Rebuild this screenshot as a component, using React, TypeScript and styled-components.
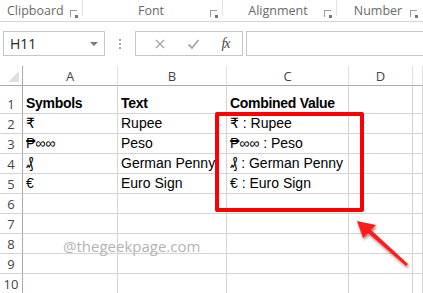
import React from "react";
import styled, { createGlobalStyle } from "styled-components";

const GlobalStyle = createGlobalStyle`
  html, body {
    margin: 0;
    padding: 0;
    background: #ffffff;
    overflow: hidden;
  }
  body {
    font-family: "Liberation Sans", Arial, sans-serif;
  }
`;

const Page = styled.div`
  position: relative;
  width: 423px;
  height: 293px;
  overflow: hidden;
  display: flex;
  flex-direction: column;
  background: #ffffff;
`;

const Ribbon = styled.div`
  height: 21px;
  border-bottom: 1px solid #d5d5d5;
  display: grid;
  grid-template-columns: 83px 140px 114px 1fr;
  align-items: start;
  flex-shrink: 0;
`;

const Group = styled.div<{ $first?: boolean }>`
  display: flex;
  align-items: flex-end;
  justify-content: ${(p) => (p.$first ? "flex-start" : "center")};
  box-sizing: border-box;
  height: 20px;
  padding-bottom: 1px;
  padding-left: ${(p) => (p.$first ? "7px" : "0")};
  padding-right: ${(p) => (p.$first ? "0" : "4px")};
  position: relative;
  font-family: "Open Sans", "Liberation Sans", sans-serif;
  font-size: 12.5px;
  line-height: 16px;
  color: #6a6a6a;
  &::before {
    content: "";
    position: absolute;
    right: 0;
    top: 0;
    height: 16px;
    border-right: 1px solid #e1e1e1;
  }
  &:last-child::before {
    display: none;
  }
`;

const Launcher = styled.span`
  position: absolute;
  right: 6px;
  top: 10px;
  width: 6px;
  height: 6px;
  border-left: 1px solid #9a9a9a;
  border-top: 1px solid #9a9a9a;
  &::after {
    content: "";
    position: absolute;
    right: -1px;
    bottom: -1px;
    width: 3px;
    height: 3px;
    background: #777;
  }
`;

const FormulaBar = styled.div`
  display: flex;
  align-items: center;
  padding: 9px 0 10px 3px;
  height: 25px;
  flex-shrink: 0;
`;

const NameBox = styled.div`
  height: 23px;
  border: 1px solid #c6c6c6;
  display: flex;
  align-items: center;
  justify-content: space-between;
  padding: 0 6px 0 6px;
  box-sizing: content-box;
  width: 88px;
  font-family: "Open Sans", "Liberation Sans", sans-serif;
  font-size: 14px;
  color: #262626;
`;

const Caret = styled.span`
  width: 0;
  height: 0;
  border-left: 4px solid transparent;
  border-right: 4px solid transparent;
  border-top: 4px solid #7a7a7a;
`;

const Dots = styled.div`
  width: 30px;
  display: flex;
  flex-direction: column;
  align-items: center;
  gap: 2px;
  span {
    width: 2px;
    height: 2px;
    background: #a6a6a6;
  }
`;

const FuncBox = styled.div`
  width: 108px;
  height: 25px;
  border: 1px solid #c6c6c6;
  display: flex;
  align-items: center;
  justify-content: space-around;
  padding: 0 2px 0 8px;
  box-sizing: border-box;
`;

const Fx = styled.span`
  font-family: "Liberation Serif", serif;
  font-style: italic;
  font-size: 14px;
  color: #444;
  letter-spacing: -1px;
`;

const FormulaInput = styled.div`
  flex: 1;
  height: 23px;
  margin-left: 3px;
  border: 1px solid #c6c6c6;
  border-right: 0;
`;

const Sheet = styled.div`
  position: relative;
  display: grid;
  grid-template-columns: 23px 95px 109px 122px 64px 1fr;
  grid-template-rows: 20px 28px repeat(9, 20px);
  flex: 1;
`;

const ColHead = styled.div<{ $corner?: boolean }>`
  border-right: 1px solid ${(p) => (p.$corner ? "#ababab" : "#e1e1e1")};
  border-bottom: 1px solid #ababab;
  display: flex;
  align-items: center;
  justify-content: center;
  font-family: "Open Sans", "Liberation Sans", sans-serif;
  font-size: 13px;
  color: #444;
  position: relative;
`;

const Triangle = styled.span`
  position: absolute;
  right: 3px;
  bottom: 3px;
  width: 0;
  height: 0;
  border-left: 11px solid transparent;
  border-bottom: 11px solid #dfdfdf;
`;

const RowHead = styled.div`
  border-right: 1px solid #ababab;
  border-bottom: 1px solid #d4d4d4;
  display: flex;
  align-items: flex-end;
  justify-content: center;
  font-family: "Open Sans", "Liberation Sans", sans-serif;
  font-size: 13px;
  line-height: 18px;
  color: #444;
`;

const Cell = styled.div<{ $bold?: boolean }>`
  border-right: 1px solid #d4d4d4;
  border-bottom: 1px solid #d4d4d4;
  display: flex;
  align-items: flex-end;
  padding: 0 0 0 3px;
  font-family: "Liberation Sans", "DejaVu Sans", sans-serif;
  font-size: 14px;
  font-weight: ${(p) => (p.$bold ? 700 : 400)};
  letter-spacing: ${(p) => (p.$bold ? "-0.3px" : "0")};
  line-height: 19px;
  color: #000;
  white-space: nowrap;
  overflow: visible;
  min-width: 0;
`;

const Highlight = styled.div`
  position: absolute;
  left: 215px;
  top: 46px;
  width: 141px;
  height: 92px;
  border: 4px solid #ff0000;
  border-radius: 2px;
  pointer-events: none;
`;

const Watermark = styled.div`
  position: absolute;
  left: 63px;
  top: 170px;
  font-family: "Open Sans", "Liberation Sans", sans-serif;
  font-size: 15px;
  color: #b3b3b3;
`;

const Arrow = styled.svg`
  position: absolute;
  left: 352px;
  top: 150px;
`;

const groups = ["Clipboard", "Font", "Alignment", "Number"];
const columns = ["A", "B", "C", "D", ""];

const rows: string[][] = [
  ["Symbols", "Text", "Combined Value"],
  ["₹", "Rupee", "₹ : Rupee"],
  ["₱∞∞", "Peso", "₱∞∞ : Peso"],
  ["₰", "German Penny", "₰ : German Penny"],
  ["€", "Euro Sign", "€ : Euro Sign"],
  [],
  [],
  [],
  [],
  [],
];

export default function App() {
  return (
    <Page>
      <GlobalStyle />
      <Ribbon>
        {groups.map((g, i) => (
          <Group key={g} $first={i === 0}>
            {g}
            <Launcher />
          </Group>
        ))}
      </Ribbon>
      <FormulaBar>
        <NameBox>
          H11
          <Caret />
        </NameBox>
        <Dots>
          <span />
          <span />
          <span />
        </Dots>
        <FuncBox>
          <svg width="12" height="12" viewBox="0 0 12 12">
            <path d="M2 2 L10 10 M10 2 L2 10" stroke="#a8a8a8" strokeWidth="1.4" />
          </svg>
          <svg width="13" height="12" viewBox="0 0 13 12">
            <path d="M1.5 6.5 L5 10 L11.5 2" stroke="#a8a8a8" strokeWidth="1.8" fill="none" />
          </svg>
          <Fx>fx</Fx>
        </FuncBox>
        <FormulaInput />
      </FormulaBar>
      <Sheet>
        <ColHead $corner>
          <Triangle />
        </ColHead>
        {columns.map((c, i) => (
          <ColHead key={i}>{c}</ColHead>
        ))}
        {rows.map((r, ri) => (
          <React.Fragment key={ri}>
            <RowHead>{ri + 1}</RowHead>
            {[0, 1, 2, 3, 4].map((ci) => (
              <Cell key={ci} $bold={ri === 0}>
                {r[ci] ?? ""}
              </Cell>
            ))}
          </React.Fragment>
        ))}
        <Highlight />
        <Watermark>@thegeekpage.com</Watermark>
        <Arrow width="64" height="56" viewBox="0 0 64 56">
          <defs>
            <filter id="sh" x="-30%" y="-30%" width="160%" height="160%">
              <feDropShadow dx="1" dy="2" stdDeviation="1.5" floodColor="#000" floodOpacity="0.45" />
            </filter>
          </defs>
          <path
            d="M5 5 L24 9 L19 14 L56 48 L54 50 L16 17 L11 22 Z"
            fill="#ff1a1a"
            filter="url(#sh)"
          />
        </Arrow>
      </Sheet>
    </Page>
  );
}
